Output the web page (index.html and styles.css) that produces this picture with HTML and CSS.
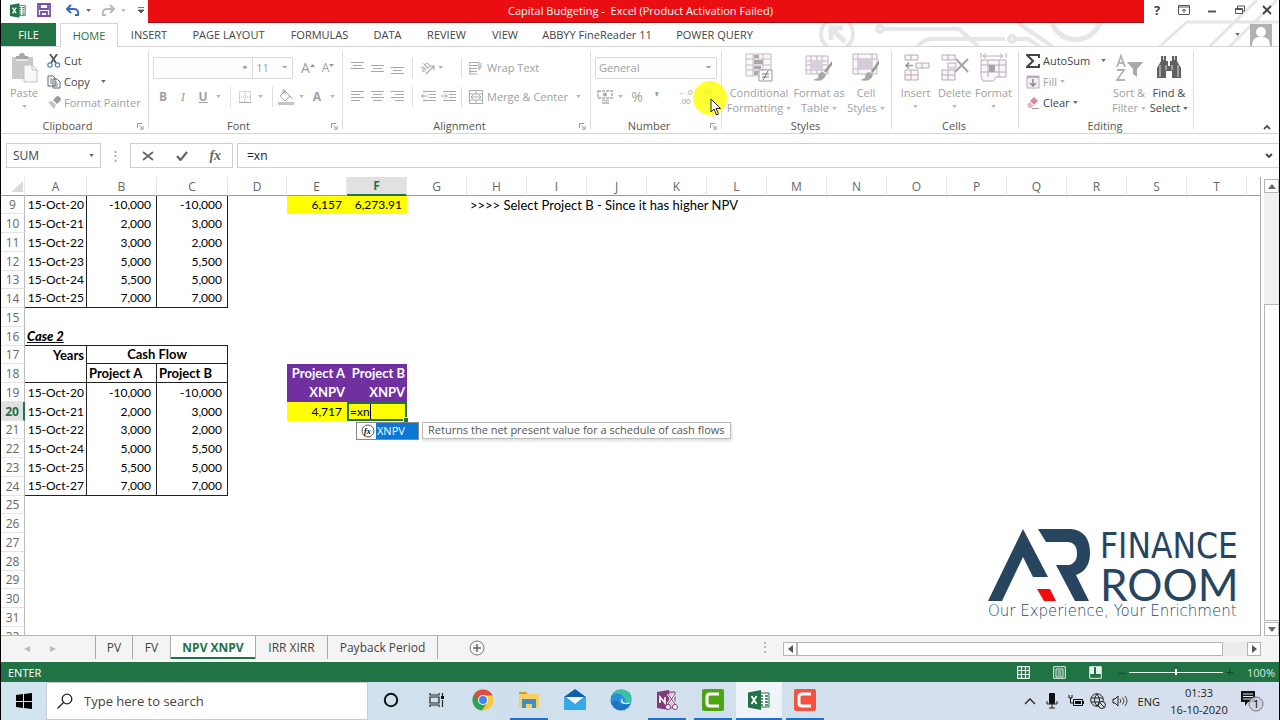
FILE: index.html
```html
<!DOCTYPE html>
<html lang="en">
<head>
<meta charset="utf-8">
<title>Capital Budgeting - Excel</title>
<link rel="stylesheet" href="styles.css">
</head>
<body>
<svg class="defs" aria-hidden="true">
  <symbol id="caret" viewBox="0 0 6 4"><path d="M0 0h6L3 4z" fill="currentColor"/></symbol>
  <symbol id="launch" viewBox="0 0 8 8"><path d="M.5 6V.5H6M3 3l3 3M7 3.5V7H3.500" fill="none" stroke="currentColor"/></symbol>
  <symbol id="excel" viewBox="0 0 22 20"><path d="M10 3h11v14H10z" fill="#fff" stroke="#217346"/><path d="M12 6h3M12 9h3M12 12h3M12 15h3M17 6h3M17 9h3M17 12h3M17 15h3" stroke="#217346" stroke-width="1.500"/><path d="M0 2.500 13 0v20L0 17.500z" fill="#217346"/><path d="m3.500 6 5 8M8.500 6l-5 8" stroke="#fff" stroke-width="1.800"/></symbol>
</svg>
<div class="app">
  <svg class="circuit" viewBox="0 0 480 47" aria-hidden="true">
    <g fill="none" stroke="#e6e6e6" stroke-width="4">
      <circle cx="38" cy="34" r="16"/><path d="m46 42-13-13M32 40V28h12" stroke-width="5"/>
      <circle cx="81" cy="29" r="3"/><path d="M85 29h75l20 18M118 47q6-8 16-8h72"/>
      <circle cx="213" cy="39" r="3"/><path d="M217 39h12l12 8M219 23l35 24"/>
      <path d="M253 24q10 18 28 15 14-2 20-16" stroke-width="5"/>
      <path d="m360 47 28-25h92M410 47l48-47M430 47l48-47" stroke-width="3"/>
    </g>
  </svg>

  <header class="titlebar">
    <div class="quick">
      <svg class="i-xl"><use href="#excel"/></svg>
      <button aria-label="Save"><svg viewBox="0 0 14 14" width="14" height="14"><path d="M1 1h12v12H1zM3 1v5h8V1M4 13V9h6v4" fill="none" stroke="#7a52ab" stroke-width="1.800"/></svg></button>
      <button aria-label="Undo"><svg viewBox="0 0 14 12" width="14" height="12"><path d="M5 1 1 5l4 4M1 5h7q5 0 4 6H9" fill="none" stroke="#3c69b5" stroke-width="2"/></svg></button>
      <svg class="caret"><use href="#caret"/></svg>
      <button class="off" aria-label="Redo"><svg viewBox="0 0 14 12" width="14" height="12"><path d="m9 1 4 4-4 4m4-4H6Q1 5 2 11h3" fill="none" stroke="#b9b9b9" stroke-width="2"/></svg></button>
      <svg class="caret off"><use href="#caret"/></svg>
      <button aria-label="Customize toolbar"><svg viewBox="0 0 6 7" width="6" height="7"><path d="M0 .5h6M0 3h6L3 6z" fill="#555" stroke="#555" stroke-width=".8"/></svg></button>
    </div>
    <h1 class="title">Capital Budgeting -&nbsp; Excel (Product Activation Failed)</h1>
    <div class="winctl">
      <button aria-label="Help" class="help">?</button>
      <button aria-label="Ribbon display"><svg viewBox="0 0 12 10" width="12" height="10"><path d="M.5.5h11v9H.5zM.5 2h11M6 8V4M4 6l2-2 2 2" fill="none" stroke="#555"/></svg></button>
      <button aria-label="Minimize"><svg viewBox="0 0 10 10" width="10" height="10"><path d="M1 6.500h8" stroke="#555" stroke-width="2"/></svg></button>
      <button aria-label="Restore"><svg viewBox="0 0 10 10" width="10" height="10"><path d="M.5 3.500h7v5h-7zM.5 4.500h7M2.500 3V1h7v5h-2" fill="none" stroke="#555"/></svg></button>
      <button aria-label="Close"><svg viewBox="0 0 10 10" width="10" height="10"><path d="m1 1 8 8M9 1 1 9" stroke="#444" stroke-width="1.800"/></svg></button>
    </div>
  </header>

  <nav class="tabs">
    <button class="file">FILE</button>
    <button class="home">HOME</button>
    <button>INSERT</button>
    <button>PAGE LAYOUT</button>
    <button>FORMULAS</button>
    <button>DATA</button>
    <button>REVIEW</button>
    <button>VIEW</button>
    <button>ABBYY FineReader 11</button>
    <button>POWER QUERY</button>
    <div class="account">
      <svg class="caret"><use href="#caret"/></svg>
      <svg viewBox="0 0 22 22" width="22" height="22"><path d="M0 0h22v22H0z" fill="#b1b1b1"/><circle cx="11" cy="8" r="5" fill="#fff"/><path d="M2 22q0-8 6-9h6q6 1 6 9z" fill="#fff"/></svg>
    </div>
  </nav>

  <section class="ribbon">
    <div class="group g-clip">
      <div class="body">
        <button class="big off w-paste"><svg viewBox="0 0 28 30" width="28" height="30"><path d="M2 4h21v22H2z" fill="#c9c9c9"/><path d="M6 6V3h3q0-3 3-3t3 3h3v3z" fill="#a6a6a6"/><path d="M6 7h12" stroke="#fff"/><path d="M14 12h8l5 5v12H14z" fill="#fbf8fb" stroke="#c5bfc5"/><path d="M22 12v5h5" fill="none" stroke="#c5bfc5"/></svg><span>Paste</span><svg class="caret"><use href="#caret"/></svg></button>
        <div class="stack">
          <button><svg viewBox="0 0 14 14" width="14" height="14"><path d="m3 0 6 9M10 0 4 9" stroke="#555" stroke-width="1.800"/><circle cx="3" cy="11" r="2.200" fill="none" stroke="#4a86b8" stroke-width="1.200"/><circle cx="10.500" cy="11" r="2.200" fill="none" stroke="#4a86b8" stroke-width="1.200"/></svg>Cut</button>
          <button><svg viewBox="0 0 14 14" width="14" height="14"><path d="M1 1h5l2 2v8H1zM6 4h4l3 3v6H6z" fill="#fff" stroke="#666"/><path d="M3 4h2M3 6h2M3 8h2M8 7h2M8 9h3M8 11h3" stroke="#5b7fa6"/></svg>Copy<svg class="caret gap"><use href="#caret"/></svg></button>
          <button class="off"><svg viewBox="0 0 14 14" width="14" height="14"><path d="m1 6 4-1 4 4-2 4z" fill="#c4c4c4"/><path d="m6 4 4 4 4-4-1-3-3-1z" fill="#9c9c9c"/></svg>Format Painter</button>
        </div>
      </div>
      <div class="label">Clipboard<svg class="launch"><use href="#launch"/></svg></div>
    </div>

    <div class="group g-font off">
      <div class="rows">
        <div class="row">
          <select class="f-name" aria-label="Font"><option></option></select>
          <select class="f-size" aria-label="Font size"><option>11</option></select>
          <button class="w20 fa" aria-label="Grow font">A<svg class="tick" viewBox="0 0 5 3"><path d="M0 3h5L2.500 0z"/></svg></button><button class="w20 fa small" aria-label="Shrink font">A<svg class="tick" viewBox="0 0 5 3"><path d="M0 0h5L2.500 3z"/></svg></button>
        </div>
        <div class="row">
          <button class="w20 b">B</button><button class="w20 i">I</button><button class="w20 u">U</button><svg class="caret"><use href="#caret"/></svg>
          <span class="sep"></span>
          <button class="w20" aria-label="Borders"><svg viewBox="0 0 12 12" width="12" height="12"><path d="M.5.5h11v11H.5zM6 0v12M0 6h12" fill="none" stroke="#b9a6b2" stroke-dasharray="1 1"/><path d="M0 11.500h12" stroke="#aaa"/></svg></button><svg class="caret"><use href="#caret"/></svg>
          <span class="sep"></span>
          <button class="w20" aria-label="Fill color"><svg viewBox="0 0 16 16" width="16" height="16"><path d="m7 2 5 5-5 5-5-5zM5 5V1h2v4M12 7l2 3" fill="none" stroke="#a5a5a5"/><path d="M0 13h16v3H0z" fill="#c8c3c8"/></svg></button><svg class="caret"><use href="#caret"/></svg>
          <button class="w20 b">A</button><svg class="caret"><use href="#caret"/></svg>
        </div>
      </div>
      <div class="label">Font<svg class="launch"><use href="#launch"/></svg></div>
    </div>

    <div class="group g-align off">
      <div class="rows">
        <div class="row">
          <button class="w20" aria-label="Top"><svg class="ln"><path d="M0 2.500h13M2 5.500h9M0 8.500h13"/></svg></button>
          <button class="w20" aria-label="Middle"><svg class="ln"><path d="M0 5.500h13M2 8.500h9M0 11.500h13"/></svg></button>
          <button class="w20" aria-label="Bottom"><svg class="ln"><path d="M0 7.500h13M2 10.500h9M0 13.500h13"/></svg></button>
          <span class="sep"></span>
          <button class="w20" aria-label="Orientation"><svg class="over" viewBox="0 0 16 14" width="16" height="14"><text x="1" y="10" class="ab" transform="rotate(-38 4 8)">ab</text><path d="m6 13 8-8m-4 0h4v4" fill="none" stroke="#aaa" stroke-width="1.200"/></svg></button><svg class="caret"><use href="#caret"/></svg>
          <span class="sep s2"></span>
          <button class="txt"><svg viewBox="0 0 14 14" width="14" height="14"><path d="M0 1.500h10v3H0zM0 7.500h8M0 10.500h8M0 13h8M1 6v7M12 2v5H9m2-2L9 7l2 2" fill="none" stroke="#aaa"/></svg>Wrap Text</button>
        </div>
        <div class="row">
          <button class="w20" aria-label="Left"><svg class="ln"><path d="M0 2.500h13M0 5.500h9M0 8.500h13M0 11.500h9"/></svg></button>
          <button class="w20" aria-label="Center"><svg class="ln"><path d="M0 2.500h13M2 5.500h9M0 8.500h13M2 11.500h9"/></svg></button>
          <button class="w20" aria-label="Right"><svg class="ln"><path d="M0 2.500h13M4 5.500h9M0 8.500h13M4 11.500h9"/></svg></button>
          <span class="sep"></span>
          <button class="w20" aria-label="Decrease indent"><svg class="ln wide"><path d="M2 2.500h13M8 5.500h7M8 8.500h7M2 11.500h13M0 7h7M3 4.500.500 7 3 9.500"/></svg></button>
          <button class="w20" aria-label="Increase indent"><svg class="ln wide"><path d="M2 2.500h13M8 5.500h7M8 8.500h7M2 11.500h13M0 7h6M4 4.500 6.500 7 4 9.500"/></svg></button>
          <span class="sep s3"></span>
          <button class="txt"><svg viewBox="0 0 14 14" width="14" height="14"><path d="M.5.500h13v13H.5zM.5 4h13M.5 10h13M7 .5V4M7 10v3.500M2 7h10M4 5 2 7l2 2M10 5l2 2-2 2" fill="none" stroke="#aaa"/></svg>Merge &amp; Center</button><svg class="caret gap"><use href="#caret"/></svg>
        </div>
      </div>
      <div class="label">Alignment<svg class="launch"><use href="#launch"/></svg></div>
    </div>

    <div class="group g-num off">
      <div class="rows">
        <div class="row"><select class="f-num" aria-label="Number format"><option>General</option></select></div>
        <div class="row">
          <button class="w20" aria-label="Currency"><svg viewBox="0 0 16 14" width="16" height="14"><path d="M1 1h14v7H1z" fill="none" stroke="#aaa" stroke-width="1.500" stroke-dasharray="3 1"/><circle cx="8" cy="4.500" r="2" fill="#aaa"/><path d="M5 10.500h7M5 13h7" stroke="#c4c4c4" stroke-width="2"/></svg></button><svg class="caret"><use href="#caret"/></svg>
          <button class="w20 pct">%</button><button class="w20 b">❜</button>
          <span class="sep"></span>
          <button class="w20 dec">←.0<br>.00</button><button class="w20 dec">.00<br>→.0</button>
        </div>
      </div>
      <div class="label">Number<svg class="launch"><use href="#launch"/></svg></div>
    </div>

    <div class="group g-styles off">
      <div class="body">
        <button class="big w-cond"><svg viewBox="0 0 28 30" width="28" height="30"><path d="M1 1h25v22H1zM1 6h25M1 12h25M1 17h25M8 1v22M18 1v22" fill="#fbf7fb" stroke="#c3bcc3"/><path d="M9 2h5v3H9zM9 7h9v4H9zM9 13h7v3H9zM9 18h4v4H9z" fill="#a9a9a9"/><path d="M14 17h13v11H14z" fill="#fff" stroke="#999"/><path d="M17 21h7M17 24h7M23 18l-5 9" stroke="#777"/></svg><span>Conditional<br>Formatting<svg class="caret"><use href="#caret"/></svg></span></button>
        <button class="big w-fmt"><svg viewBox="0 0 28 30" width="28" height="30"><path d="M1 3h22v18H1zM1 8h22M1 12h22M1 17h22M6 3v18M12 3v18M17 3v18" fill="#fbf7fb" stroke="#bdb5bd"/><path d="M6 8h11v9H6z" fill="#d8d0d8"/><path d="m27 8-8 10 2 2 6-8z" fill="#999"/><path d="M18 19q-5 0-5 6l-5 2q10 3 13-5z" fill="#a8a8a8"/></svg><span>Format as<br>Table<svg class="caret"><use href="#caret"/></svg></span></button>
        <button class="big w-cell"><svg viewBox="0 0 28 30" width="28" height="30"><path d="M1 1h24v20H1zM1 6h24M1 16h24M6 1v20M20 1v20" fill="#fbf7fb" stroke="#bdb5bd"/><path d="M6 6h14v10H6z" fill="#d5cdd5"/><path d="m27 7-8 11 2 2 6-9z" fill="#999"/><path d="M18 19q-5 0-5 6l-5 2q10 3 13-5z" fill="#a8a8a8"/></svg><span>Cell<br>Styles<svg class="caret"><use href="#caret"/></svg></span></button>
      </div>
      <div class="label">Styles</div>
    </div>

    <div class="group g-cells off">
      <div class="body">
        <button class="big w39"><svg viewBox="0 0 28 30" width="28" height="30"><path d="M3 2h13v5H3zM9 2v5M3 17h13v10H3zM3 22h13M9 17v10M14 10h13v5H14zM20 10v5" fill="#faf5fa" stroke="#b4acb4"/><path d="M4 12.500h7M7 9.500l-3 3 3 3" fill="none" stroke="#999" stroke-width="1.500"/></svg><span>Insert</span><svg class="caret"><use href="#caret"/></svg></button>
        <button class="big w39"><svg viewBox="0 0 28 30" width="28" height="30"><path d="M1 2h13v5H1zM7 2v5M1 17h13v10H1zM1 22h13M7 17v10M7 10h8v5H7z" fill="#faf5fa" stroke="#b4acb4"/><path d="m15 6 12 13M27 6 14 19" stroke="#a5a5a5" stroke-width="2"/></svg><span>Delete</span><svg class="caret"><use href="#caret"/></svg></button>
        <button class="big w39"><svg viewBox="0 0 28 30" width="28" height="30"><path d="M1 7h25v17H16l-3 4H3l-2-4zM1 12h25M1 19h25M8 7v17M19 7v17" fill="#faf5fa" stroke="#b4acb4"/><path d="M9 12h6v7H9z" fill="#a5a5a5"/><path d="M3 3h20M6 .5 3 3l3 2.500M20 .5 23 3l-3 2.500M1 0v5M26 0v5" fill="none" stroke="#b0b0b0"/></svg><span>Format</span><svg class="caret"><use href="#caret"/></svg></button>
      </div>
      <div class="label">Cells</div>
    </div>

    <div class="group g-edit">
      <div class="body">
        <div class="stack">
          <button><svg viewBox="0 0 14 14" width="14" height="14"><path d="M13 4V1H1l6 6-6 6h12v-3" fill="none" stroke="#444" stroke-width="2"/></svg>AutoSum<svg class="caret gap"><use href="#caret"/></svg></button>
          <button class="off"><svg viewBox="0 0 14 14" width="14" height="14"><path d="M1 1h12v12H1z" fill="#f4eff4" stroke="#b5b0b5"/><path d="M1 1h12v2H1z" fill="#b5b0b5"/><path d="M7 4v7M4 8l3 3 3-3" fill="none" stroke="#888" stroke-width="1.500"/></svg>Fill<svg class="caret"><use href="#caret"/></svg></button>
          <button><svg viewBox="0 0 14 14" width="14" height="14"><path d="m8 1 4 4-4 4-4-4z" fill="#e0879b"/><path d="m3.500 6 4 4-2 2H3L1 9z" fill="#eab4c0"/><path d="M6 12.500h7" stroke="#999"/></svg>Clear<svg class="caret"><use href="#caret"/></svg></button>
        </div>
        <button class="big off w-sort"><svg viewBox="0 0 28 30" width="28" height="30"><path d="m2 14 4-11 4 11M3.500 10h5M2 17h7L2 27h8" fill="none" stroke="#b3b3b3" stroke-width="1.800"/><path d="M12 9h16l-6 7v8l-4-3v-5z" fill="#aaa"/></svg><span>Sort &amp;<br>Filter<svg class="caret"><use href="#caret"/></svg></span></button>
        <button class="big w-find"><svg viewBox="0 0 28 30" width="28" height="30"><path d="M6 3h5v5h2v5h2V8h2V3h5v5l4 7v10h-9v-7h-6v7H2V15l4-7z" fill="#606060"/><path d="M8.500 3v4M19.500 3v4M5 12v12M23 12v12M11 12v5M17 12v5" stroke="#ddd"/></svg><span>Find &amp;<br>Select<svg class="caret"><use href="#caret"/></svg></span></button>
      </div>
      <div class="label">Editing</div>
    </div>
    <button class="collapse" aria-label="Collapse ribbon"><svg viewBox="0 0 8 6" width="8" height="6"><path d="m1 5 3-3 3 3" fill="none" stroke="#555" stroke-width="1.800"/></svg></button>
    <div class="pointer">
      <svg viewBox="0 0 12 18" width="12" height="18"><path d="M1 1v13l3-3 2.500 6 2-1L6 10.500h4.500z" fill="#fff" stroke="#222"/></svg>
    </div>
  </section>

  <section class="formula">
    <div class="namebox"><input value="SUM" aria-label="Name box"><svg class="caret"><use href="#caret"/></svg></div>
    <span class="dots">⋮</span>
    <div class="fbtns">
      <button aria-label="Cancel"><svg viewBox="0 0 12 10" width="12" height="10"><path d="m1 1 10 8M11 1 1 9" stroke="#666" stroke-width="1.800"/></svg></button>
      <button aria-label="Enter"><svg viewBox="0 0 12 10" width="12" height="10"><path d="m1 5 3.500 4L11 1" fill="none" stroke="#666" stroke-width="2.200"/></svg></button>
      <button aria-label="Insert function" class="fx">fx</button>
    </div>
    <div class="finput"><input value="=xn" aria-label="Formula"><svg viewBox="0 0 8 6" width="8" height="6"><path d="m1 1 3 3 3-3" fill="none" stroke="#444" stroke-width="1.800"/></svg></div>
  </section>

  <main class="work">
    <div class="sheet">
      <table>
        <colgroup><col class="cg"><col class="ca"><col class="cb"><col class="cc"><col class="cd"><col class="c"><col class="c"><col class="c"><col class="c"><col class="c"><col class="c"><col class="c"><col class="c"><col class="c"><col class="c"><col class="c"><col class="c"><col class="c"><col class="c"><col class="c"><col class="c"></colgroup>
        <thead><tr><th class="corner"><svg viewBox="0 0 12 11" width="12" height="11"><path d="M12 0v11H0z" fill="#dadada"/></svg></th><th>A</th><th>B</th><th>C</th><th>D</th><th>E</th><th class="on">F</th><th>G</th><th>H</th><th>I</th><th>J</th><th>K</th><th>L</th><th>M</th><th>N</th><th>O</th><th>P</th><th>Q</th><th>R</th><th>S</th><th>T</th><th></th></tr></thead>
        <tbody>
          <tr class="short d"><th>9</th><td>15-Oct-20</td><td>-10,000</td><td>-10,000</td><td></td><td class="y n">6,157</td><td class="y n">6,273.91</td><td></td><td class="note">&gt;&gt;&gt;&gt; Select Project B - Since it has higher NPV</td></tr>
          <tr class="d"><th>10</th><td>15-Oct-21</td><td>2,000</td><td>3,000</td></tr>
          <tr class="d"><th>11</th><td>15-Oct-22</td><td>3,000</td><td>2,000</td></tr>
          <tr class="d"><th>12</th><td>15-Oct-23</td><td>5,000</td><td>5,500</td></tr>
          <tr class="d short"><th>13</th><td>15-Oct-24</td><td>5,500</td><td>5,000</td></tr>
          <tr class="d last"><th>14</th><td>15-Oct-25</td><td>7,000</td><td>7,000</td></tr>
          <tr><th>15</th></tr>
          <tr class="last"><th>16</th><td class="case">Case 2</td><td></td><td></td></tr>
          <tr class="short h"><th>17</th><td class="r">Years</td><td colspan="2" class="m bb">Cash Flow</td></tr>
          <tr class="h last"><th>18</th><td></td><td>Project A</td><td>Project B</td><td class="none"></td><td class="p">Project A</td><td class="p">Project B</td></tr>
          <tr class="d"><th>19</th><td>15-Oct-20</td><td>-10,000</td><td>-10,000</td><td></td><td class="p">XNPV</td><td class="p">XNPV</td></tr>
          <tr class="d"><th class="on">20</th><td>15-Oct-21</td><td>2,000</td><td>3,000</td><td></td><td class="y n">4,717</td>
            <td class="y edit"><span contenteditable="true">=xn</span><i class="handle"></i>
              <div class="suggest"><button><svg viewBox="0 0 14 14" width="14" height="14"><circle cx="7" cy="7" r="6" fill="#fff" stroke="#555"/><text x="3" y="10" class="fxs">fx</text></svg><b>XNPV</b></button><div class="tip">Returns the net present value for a schedule of cash flows</div></div>
            </td></tr>
          <tr class="short d"><th>21</th><td>15-Oct-22</td><td>3,000</td><td>2,000</td></tr>
          <tr class="d"><th>22</th><td>15-Oct-24</td><td>5,000</td><td>5,500</td></tr>
          <tr class="d"><th>23</th><td>15-Oct-25</td><td>5,500</td><td>5,000</td></tr>
          <tr class="d last"><th>24</th><td>15-Oct-27</td><td>7,000</td><td>7,000</td></tr>
          <tr class="short"><th>25</th></tr>
          <tr><th>26</th></tr>
          <tr><th>27</th></tr>
          <tr><th>28</th></tr>
          <tr class="short"><th>29</th></tr>
          <tr><th>30</th></tr>
          <tr><th>31</th></tr>
          <tr><th>32</th></tr>
        </tbody>
      </table>
      <div class="logo">
        <svg class="mark" viewBox="0 0 104 76" width="104" height="76"><path d="M0 73 35 1l25 48H45L35 29 14 73z" fill="#27455f"/><path d="M50 1h33q19 2 19 24 0 17-14 22l13 26H87L68 37h13q8-2 8-11 0-12-10-12H58z" fill="#27455f"/><path d="M49 61h13l6 12H56z" fill="#f00c0c"/></svg>
        <div class="words"><span class="fin">FINANCE</span><span class="room">ROOM</span></div>
        <div class="motto">Our Experience, Your Enrichment</div>
      </div>
    </div>
    <div class="vscroll">
      <button aria-label="Scroll up"><svg viewBox="0 0 8 5" width="8" height="5"><path d="M0 5h8L4 0z" fill="#666"/></svg></button>
      <div class="track"></div><div class="thumb"></div>
      <button aria-label="Scroll down"><svg viewBox="0 0 8 5" width="8" height="5"><path d="M0 0h8L4 5z" fill="#666"/></svg></button>
    </div>
  </main>

  <footer class="sheets">
    <div class="arrows"><button aria-label="Previous sheet">◂</button><button aria-label="Next sheet">▸</button></div>
    <button class="s38">PV</button><button class="s38">FV</button><button class="s85 cur">NPV XNPV</button><button class="s72">IRR XIRR</button><button class="s110">Payback Period</button>
    <button class="add" aria-label="New sheet"><svg viewBox="0 0 16 16" width="16" height="16"><circle cx="8" cy="8" r="7" fill="none" stroke="#777"/><path d="M8 4v8M4 8h8" stroke="#666" stroke-width="1.500"/></svg></button>
    <span class="dots">⋮</span>
    <div class="hscroll"><button aria-label="Scroll left"><svg viewBox="0 0 5 8" width="5" height="8"><path d="M5 0v8L0 4z" fill="#555"/></svg></button><div class="hthumb"></div><div class="htrack"></div><button aria-label="Scroll right"><svg viewBox="0 0 5 8" width="5" height="8"><path d="M0 0v8l5-4z" fill="#555"/></svg></button></div>
  </footer>

  <div class="status">
    <span>ENTER</span>
    <div class="views">
      <button aria-label="Normal"><svg viewBox="0 0 13 13" width="13" height="13"><path d="M.7.700h11.600v11.600H.7zM4.500 1v11M8.500 1v11M1 4.500h11M1 8.500h11" fill="none" stroke="#e6f2ea" stroke-width="1.200"/></svg></button>
      <button aria-label="Page layout"><svg viewBox="0 0 13 13" width="13" height="13"><path d="M.7.700h11.600v11.600H.7zM3 3h7v8H3zM4.500 5h4M4.500 7h4M4.500 9h4" fill="none" stroke="#e6f2ea"/></svg></button>
      <button aria-label="Page break"><svg viewBox="0 0 13 13" width="13" height="13"><path d="M.7.700h11.600v11.600H.7z" fill="none" stroke="#e6f2ea"/><path d="M1 1h4v7H1zM7 1h5v7H7z" fill="#e6f2ea"/></svg></button>
    </div>
    <span class="sign">−</span><input type="range" min="10" max="190" value="100" aria-label="Zoom"><span class="sign">+</span>
    <span class="zoom">100%</span>
  </div>

  <div class="taskbar">
    <button class="start" aria-label="Start"><svg viewBox="0 0 16 16" width="16" height="16"><path d="m0 2 7-1v7H0zM8 1l8-1v8H8zM0 9h7v6l-7-1zM8 9h8v7l-8-1z" fill="#000"/></svg></button>
    <label class="search"><svg viewBox="0 0 16 16" width="16" height="16"><circle cx="10" cy="6" r="4.800" fill="none" stroke="#222" stroke-width="1.300"/><path d="m6.500 9.500-6 6" stroke="#222" stroke-width="1.300"/></svg><input placeholder="Type here to search" aria-label="Search"></label>
    <button class="app-i" aria-label="Cortana"><svg viewBox="0 0 16 16" width="16" height="16"><circle cx="8" cy="8" r="6.200" fill="none" stroke="#111" stroke-width="2"/></svg></button>
    <button class="app-i" aria-label="Task view"><svg viewBox="0 0 16 16" width="16" height="16"><path d="M1 1v2h9V1M1 5h9v6H1zM1 15v-2h9v2M13.500 1v3M13.500 8v7" fill="none" stroke="#222" stroke-width="1.200"/><path d="M12 4h3v3h-3z" fill="#111"/></svg></button>
    <button class="app-i" aria-label="Chrome"><svg viewBox="0 0 22 22" width="22" height="22"><circle cx="11" cy="11" r="10.500" fill="#f6c93b"/><path d="M2 5.500A10.500 10.500 0 0 0 10 21.500l5-8-4-2.500z" fill="#2f9e57"/><path d="M2 5.500A10.500 10.500 0 0 1 20.500 6.500H11L7 13z" fill="#db4b3f"/><circle cx="11" cy="11" r="5" fill="#fff"/><circle cx="11" cy="11" r="4" fill="#4384ee"/></svg></button>
    <button class="app-i run" aria-label="File Explorer"><svg viewBox="0 0 22 20" width="22" height="20"><path d="M1 2h7l2 2h11v14H1z" fill="#f7cf63"/><path d="M1 2h7l2 2H1z" fill="#d69b27"/><path d="M4 9h14v9h-4v-4H8v4H4z" fill="#3f8fc4"/></svg></button>
    <button class="app-i" aria-label="Mail"><svg viewBox="0 0 22 22" width="22" height="22"><path d="M0 8 11 0l11 8z" fill="#0c5fae"/><path d="M0 8h22v13H0z" fill="#2d9be0"/><path d="M2 8h18l-9 7z" fill="#f4f8fb"/><path d="M0 21V8l11 8 11-8v13z" fill="#35aae6"/></svg></button>
    <button class="app-i" aria-label="Edge"><svg viewBox="0 0 22 22" width="22" height="22"><circle cx="11" cy="11" r="10.500" fill="#1c74c4"/><path d="M1 9Q4 0 12 .5q10 1 9.500 9-.5 6-7 5.500-3 0-2-3 0-5-5-5Q3 7 1 9z" fill="#3bc1a5"/><path d="M1 9q4-7 11-3l3 4q1 7-5 5Q6 9 1 13z" fill="#2b8fd8"/><path d="M12 9q-4 7 7 6l2-2q-5 2-8 0z" fill="#e3f1fa"/></svg></button>
    <button class="app-i run" aria-label="OneNote"><svg viewBox="0 0 22 22" width="22" height="22"><path d="m1 3 12-2v20L1 19z" fill="#80397b"/><path d="M13 3h6v16h-6z" fill="#d9c2d8" stroke="#80397b"/><path d="M4 14V8l5 6V8" fill="none" stroke="#fff" stroke-width="1.600"/><path d="m12 5 7 10M19 5l-7 10" stroke="#fff" stroke-width="3"/><path d="m12 5 7 10M19 5l-7 10" stroke="#80397b"/><circle cx="12" cy="18" r="2.500" fill="#fff" stroke="#80397b"/><circle cx="19" cy="18" r="2.500" fill="#fff" stroke="#80397b"/></svg></button>
    <button class="app-i run" aria-label="Camtasia"><svg viewBox="0 0 22 22" width="22" height="22"><rect width="22" height="22" rx="2" fill="#4ea512"/><path d="M17 5H8q-3 0-3 3v6q0 3 3 3h9" fill="none" stroke="#fff" stroke-width="3"/></svg></button>
    <button class="app-i run now" aria-label="Excel"><svg viewBox="0 0 22 20" width="22" height="22"><use href="#excel"/></svg></button>
    <button class="app-i run" aria-label="Camtasia Recorder"><svg viewBox="0 0 22 22" width="22" height="22"><rect width="22" height="22" rx="2" fill="#f4523f"/><path d="M17 5H8q-3 0-3 3v6q0 3 3 3h9" fill="none" stroke="#fff" stroke-width="3"/></svg></button>
    <div class="tray">
      <svg viewBox="0 0 12 8" width="12" height="8"><path d="m1 7 5-5 5 5" fill="none" stroke="#222" stroke-width="1.300"/></svg>
      <svg class="mic" viewBox="0 0 12 16" width="12" height="16"><rect x="3" width="6" height="11" rx="1" fill="#111"/><path d="M1 8v3h10V8M6 11v4M3 15h6" fill="none" stroke="#222"/></svg>
      <svg viewBox="0 0 16 12" width="16" height="12"><path d="M5.500 4.500h9v6h-9z" fill="none" stroke="#111"/><path d="M7 6h6v3H7z" fill="#111"/><path d="M15.500 6v3M1 0v3h3V0M2.500 3v5h3" stroke="#111" fill="none"/></svg>
      <svg viewBox="0 0 16 16" width="16" height="16"><circle cx="7" cy="7" r="6.300" fill="none" stroke="#222"/><path d="M1 5h12M1 9h12M7 1q-5 6 0 12M7 1q5 6 0 12" fill="none" stroke="#222"/><circle cx="12" cy="12" r="3.500" fill="#dbe3ef" stroke="#222"/><path d="m9.500 9.500 5 5" stroke="#222"/></svg>
      <svg viewBox="0 0 16 12" width="16" height="12"><path d="M1 4h2l3-3v10L3 8H1z" fill="none" stroke="#222"/><path d="M8 4q1.500 2 0 4M10.500 2.500q3 3.500 0 7M13 1q4 5 0 10" fill="none" stroke="#444"/></svg>
      <span class="eng">ENG</span>
      <span class="clock">01:33<br>16-10-2020</span>
      <button class="notif" aria-label="Notifications"><svg viewBox="0 0 24 22" width="24" height="22"><path d="M1 1h14v11H8l-3 4v-4H1z" fill="#111"/><path d="M3 4h10M3 6.500h10M3 9h10" stroke="#dfe5ef"/><circle cx="16" cy="14" r="7" fill="#ccd1db" fill-opacity=".85" stroke="#777"/><text x="13" y="18" class="one">1</text></svg></button>
    </div>
  </div>
</div>
</body>
</html>
```

FILE: styles.css
```css
* { box-sizing: border-box; }
body { margin: 0; background: #fff; font: 11px/15px "Open Sans", "Noto Sans", sans-serif; color: #444; }
button, input, select { font: inherit; color: inherit; background: none; border: 0; border-radius: 0; padding: 0; margin: 0; outline: 0; }
svg { display: block; flex: none; }
.defs { position: absolute; width: 0; height: 0; }
.app { position: relative; height: 100vh; display: flex; flex-direction: column; overflow: hidden; border-left: 1px solid #000; border-right: 1px solid #000; }
.circuit { position: absolute; top: 0; right: 0; width: 480px; height: 47px; }
.caret { width: 5px; height: 3px; color: #666; }
.caret.gap { margin-left: 8px; }
.off { color: #a0a0a0; }
.off .caret, .caret.off { color: #b5b5b5; }

.titlebar { flex: 0 0 23px; display: flex; position: relative; }
.quick { width: 147px; display: flex; align-items: center; padding: 0 4px 3px 9px; gap: 6px; }
.quick button:first-of-type { margin: 0 9px 0 5px; }
.quick .off { margin-left: 4px; }
.quick button:last-child { margin-left: auto; }
.quick .caret.off { margin-left: 0; }
.i-xl { width: 16px; height: 15px; }
.title { flex: 1; margin: 0; background: #ea0d12; border-bottom: 1px solid #9f1015; color: #fff; font-size: 11px; font-weight: 400; line-height: 22px; text-align: center; padding-right: 11px; }
.winctl { width: 135px; display: flex; align-items: center; justify-content: space-between; padding: 0 7px 3px 10px; }
.help { font-weight: 700; font-size: 13px; }

.tabs { flex: 0 0 24px; position: relative; display: grid; grid-template-columns: 55px 58px 61px 98px 84px 52px 66px 51px 133px 102px 1fr; border-bottom: 1px solid #d4d4d4; }
.file { background: #217346; color: #fff; }
.tabs .home { color: #217346; background: #fff; border: 1px solid #d4d4d4; border-bottom: 0; margin: 0 -4px -1px 4px; }
.tabs button:nth-child(n+3) { padding-left: 9px; }
.account { display: flex; align-items: center; justify-content: flex-end; gap: 10px; padding-right: 7px; }

.ribbon { flex: 0 0 87px; position: relative; display: flex; background: #fff; border-bottom: 1px solid #d4d4d4; }
.group { flex: none; display: flex; flex-direction: column; padding-right: 1px; background: linear-gradient(#dcdcdc, #dcdcdc) right 4px / 1px 78px no-repeat; background-position: right 4px; }
.g-clip { width: 148px; } .g-font { width: 194px; } .g-align { width: 248px; } .g-num { width: 131px; }
.g-styles { width: 170px; } .g-cells { width: 127px; } .g-edit { width: 175px; }
.body { flex: 1; display: flex; padding: 3px 2px 0 4px; }
.rows { flex: 1; padding: 6px 4px 0 4px; }
.row { height: 29px; display: flex; align-items: center; }
.label { position: relative; height: 15px; text-align: center; color: #555; padding-right: 14px; }
.g-styles .label, .g-cells .label, .g-edit .label { padding-right: 2px; }
.launch { position: absolute; right: 4px; top: 5px; width: 7px; height: 7px; color: #888; }
.big { display: flex; flex-direction: column; align-items: center; line-height: 15px; }
.big > svg:first-child { margin: 3px 0 2px; }
.big > .caret { margin-top: 5px; }
.big span { white-space: nowrap; }
.big span .caret { display: inline-block; margin-left: 3px; vertical-align: 2px; }
.w-paste { width: 38px; }
.stack { display: flex; flex-direction: column; margin-left: 4px; }
.stack button { height: 21px; display: flex; align-items: center; gap: 3px; white-space: nowrap; }
.w20 { flex: none; width: 20px; display: flex; justify-content: center; align-items: center; }
.sep { width: 1px; height: 20px; background: #dedede; margin: 0 6px; }
.b { font-weight: 700; } .i { font-style: italic; font-family: "Liberation Serif", serif; font-size: 13px; } .u { text-decoration: underline; font-weight: 700; }
.b, .u { font-size: 12px; }
select { appearance: none; height: 22px; border: 1px solid #dcdcdc; padding: 0 3px; opacity: 1; background: linear-gradient(45deg, transparent 50%, #aaa 50%) right 7px center / 3px 3px no-repeat, linear-gradient(135deg, #aaa 50%, transparent 50%) right 4px center / 3px 3px no-repeat, #fdfdfd; }
.f-name { width: 104px; } .f-size { width: 41px; margin-right: 5px; border-left: 0; } .f-num { width: 122px; }
.fa { font-size: 14px; } .small { font-size: 12px; }
.tick { width: 5px; height: 3px; fill: #999; align-self: flex-start; margin-top: 4px; }
.g-font .row > .caret { margin: 0 3px; }
.g-font .sep { margin: 0 4px 0 6px; }
.ln { width: 13px; height: 15px; fill: none; stroke: #a8a8a8; }
.ln.wide { width: 15px; }
.over { overflow: visible; }
.g-align .sep { margin: 0 5px; }
.g-align .s2 { margin: 0 7px 0 18px; }
.g-align .s3 { margin: 0 7px 0 3px; }
.txt { display: flex; align-items: center; gap: 4px; white-space: nowrap; }
.ab { font-size: 9px; fill: #999; }
.pct { font-size: 14px; }
.dec { font: 8px/9px "Liberation Sans", sans-serif; }
.g-num .row > .caret { margin: 0 4px 0 3px; }
.g-num .sep { margin: 0 3px 0 5px; }
.dec + .dec { margin-left: 2px; }
.w-cond { width: 66px; } .w-fmt { width: 54px; } .w-cell { width: 40px; } .w39 { width: 39px; }
.g-edit .body { padding-left: 3px; }
.g-edit .stack { width: 83px; }
.w-sort { width: 40px; } .w-find { width: 40px; }
.g-edit { color: #444; }
.collapse { margin: auto 8px 3px auto; }
.pointer { position: absolute; left: 692px; top: 34px; width: 34px; height: 34px; border-radius: 50%; background: rgba(255, 255, 0, .8); padding: 17px 0 0 17px; }

.formula { flex: 0 0 33px; display: flex; padding-top: 9px; }
.formula > div { border: 1px solid #cfcfcf; height: 25px; display: flex; align-items: center; }
.namebox { width: 95px; margin-left: 5px; padding: 0 6px; }
.namebox input { flex: 1; min-width: 0; font-size: 12px; }
.formula .dots { width: 29px; text-align: center; line-height: 25px; color: #999; font-size: 13px; }
.fbtns { width: 103px; justify-content: space-around; }
.fx { font: italic 700 14px "Liberation Serif", serif; color: #666; }
.finput { flex: 1; margin-left: 4px; padding: 0 6px 0 9px; border-right: 0 !important; }
.finput input { flex: 1; color: #222; font-size: 12px; }

.work { flex: 1; min-height: 0; display: flex; padding-top: 9px; }
.sheet { flex: 1; min-width: 0; position: relative; overflow: hidden; border-bottom: 1px solid #b5b5b5; border-right: 1px solid #aaa; }
table { table-layout: fixed; width: 1284px; border-spacing: 0; color: #000; font: 12px/18px Lato, "Open Sans", sans-serif; }
.cg { width: 24px; } .ca { width: 62px; } .cb { width: 70px; } .cc { width: 71px; } .cd { width: 59px; } .c { width: 60px; }
tr { height: 19px; } tr.short { height: 18px; }
td, th { padding: 0; white-space: nowrap; height: inherit; }
th { font: 12px/17px "Open Sans", sans-serif; color: #666; text-align: center; }
thead th { border-bottom: 1px solid #9b9b9b; border-right: 1px solid #e8e8e8; }
thead th.on { background: #e1e1e1; border-bottom: 2px solid #217346; color: #217346; font-weight: 700; line-height: 16px; }
.corner svg { margin: 0 0 0 10px; }
tbody th { border-right: 1px solid #bbb; border-bottom: 1px solid #e4e4e4; }
tbody th.on { background: #e1e1e1; color: #217346; font-weight: 700; border-right: 2px solid #217346; }
td { text-align: left; padding: 0 3px; }
.d td:nth-child(2), .d td:nth-child(3), .d td:nth-child(4), .h td:nth-child(2), .h td:nth-child(3), .h td:nth-child(4):not(.none) { border-right: 1px solid #222; }
.d td:nth-child(2) { text-align: right; padding: 0 2px; }
.d td:nth-child(3), .d td:nth-child(4), .n { text-align: right; padding: 0 5px; }
.last td:nth-child(-n+4) { border-bottom: 1px solid #222; }
.h td, .p { font-weight: 700; font-size: 13px; line-height: 17px; }
.note { font-size: 13px; line-height: 17px; }
.h td:nth-child(3), .h td:nth-child(4) { padding: 0 2px; }
.case { font-weight: 900; font-style: italic; text-decoration: underline; font-size: 13px; padding: 0 2px; }
.r, .p { text-align: right; padding: 0 2px; }
.h .r, .h .p { text-align: right; padding: 0 2px; }
.h .m { text-align: center; } .bb { border-bottom: 1px solid #222; }
.y { background: #ff0; }
.p { background: #7030a0; color: #fff; }
.edit { position: relative; border: 2px solid #217346; line-height: 15px; padding: 0 1px; }
.edit span { display: inline-block; border-right: 1px solid #000; outline: 0; }
.handle { position: absolute; right: -3px; bottom: -3px; width: 5px; height: 5px; background: #217346; border: 1px solid #fff; border-width: 1px 0 0 1px; }
.suggest { position: absolute; z-index: 2; left: 7px; top: 18px; display: flex; gap: 3px; font: 11px/16px "Open Sans", sans-serif; }
.suggest button { width: 63px; height: 18px; display: flex; align-items: center; border: 1px solid #888; background: #fff; padding-left: 4px; gap: 1px; }
.suggest b { flex: 1; background: #0a78d7; color: #fff; font-weight: 400; text-align: left; padding-left: 1px; font-size: 11px; }
.tip { height: 17px; border: 1px solid #bbb; background: #fff; color: #555; padding: 0 5px; line-height: 14px; box-shadow: 1px 2px 3px #ddd; }
.fxs { font: italic 700 8px "Liberation Serif", serif; }
.logo { position: absolute; right: 19px; bottom: 17px; width: 253px; display: grid; grid-template-columns: 104px 1fr; column-gap: 8px; color: #27455f; }
.words { display: flex; flex-direction: column; justify-content: space-between; height: 74px; }
.fin { font: 35px/36px "DejaVu Sans Condensed", Lato, sans-serif; }
.room { font: 44px/36px Lato, sans-serif; }
.motto { grid-column: 1 / 3; font: 15px/14px "DejaVu Sans", sans-serif; font-weight: 200; white-space: nowrap; }
.vscroll { width: 15px; margin-left: 3px; display: flex; flex-direction: column; padding-top: 2px; background: #fff; }
.vscroll button { height: 14px; border: 1px solid #b5b5b5; display: flex; align-items: center; justify-content: center; background: #fff; }
.track { flex: 112; background: #f0f0f0; } .thumb { flex: 316; border: 1px solid #b5b5b5; border-right: 0; background: #fff; margin-bottom: 1px; }

.sheets { flex: 0 0 26px; display: flex; background: #f4f4f4; line-height: 22px; font-size: 12px; padding-bottom: 3px; }
.arrows { width: 94px; display: flex; color: #bbb; padding-left: 23px; gap: 20px; }
.s38, .s85, .s72, .s110 { border-right: 1px solid #aaa; }
.s38 { width: 38px; } .s85 { width: 85px; } .s72 { width: 72px; } .s110 { width: 110px; }
.arrows + .s38 { border-left: 1px solid #aaa; }
.cur { background: #fff; color: #217346; font-weight: 700; box-shadow: inset 0 -2px #217346; }
.add { margin-left: 31px; }
.sheets .dots { margin-left: auto; color: #999; }
.hscroll { width: 478px; margin: 6px 18px 3px 12px; display: flex; }
.hscroll button { width: 14px; border: 1px solid #b5b5b5; background: #fff; display: flex; align-items: center; justify-content: center; }
.hthumb { flex: 426; border: 1px solid #b5b5b5; background: #fff; } .htrack { flex: 24; background: #ececec; }

.status { flex: 0 0 20px; background: #217346; color: #fff; display: flex; align-items: center; padding: 0 4px 0 7px; }
.views { margin-left: auto; display: flex; gap: 23px; margin-right: 15px; }
.sign { width: 10px; text-align: center; color: #0c4a26; font-size: 14px; }
input[type=range] { appearance: none; width: 94px; height: 10px; margin: 0 2px; background: linear-gradient(#e6f2ea, #e6f2ea) center / 100% 1px no-repeat; }
input[type=range]::-webkit-slider-thumb { appearance: none; width: 2px; height: 6px; background: #fff; }
.zoom { margin-left: 12px; color: #d5e8dc; }

.taskbar { flex: 0 0 38px; display: flex; background: linear-gradient(90deg, #cfe5f0, #cfe0ec 40%, #d8dfee); color: #222; }
.start { width: 45px; display: flex; align-items: center; justify-content: center; }
.search { width: 322px; background: #fff; border: 1px solid #ccc; display: flex; align-items: center; padding-left: 10px; gap: 11px; }
.search input { flex: 1; font-size: 13px; }
.search input::placeholder { color: #444; opacity: 1; }
.app-i { width: 46px; display: flex; align-items: center; justify-content: center; border-bottom: 2px solid transparent; }
.run { background: linear-gradient(#1a73d0, #1a73d0) center bottom / 38px 2px no-repeat; background-origin: border-box; }
.run.now { background-color: #eff4fa; background-size: 46px 2px; }
.tray { margin-left: auto; display: flex; align-items: center; gap: 6px; padding-right: 15px; }
.mic { margin: 0 4px; }
.eng { font-size: 11px; margin: 0 3px 0 4px; }
.clock { text-align: center; font-size: 11px; line-height: 17px; width: 60px; }
.notif { margin-left: 5px; }
.one { font: 11px "Open Sans", sans-serif; }
```
